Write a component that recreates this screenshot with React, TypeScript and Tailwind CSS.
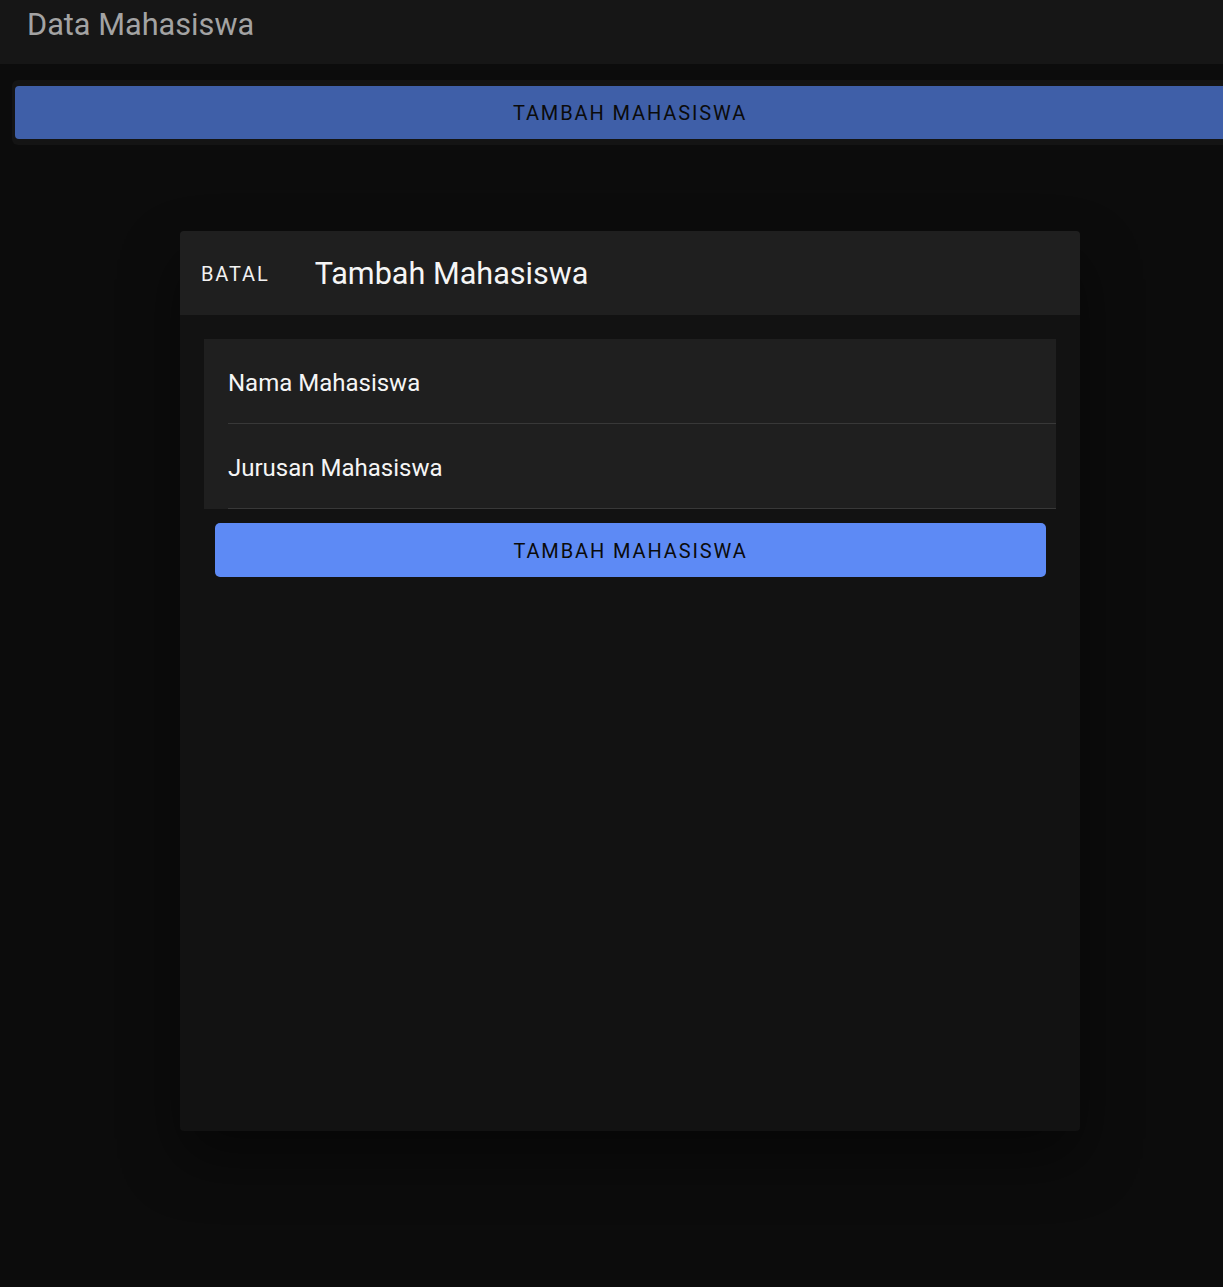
import React from "react";

export default function App() {
  const font = { fontFamily: "Roboto, 'Noto Sans', sans-serif" };
  return (
    <div
      className="relative w-[1223px] h-[1287px] overflow-hidden bg-[#0c0c0c]"
      style={font}
    >
      {/* Header */}
      <div className="h-[64px] bg-[#161616] pl-[27px] pt-[7px]">
        <div className="text-[30.7px] leading-[36px] text-[#a3a3a3]">Data Mahasiswa</div>
      </div>

      {/* Top button strip */}
      <div className="mt-[16px] ml-[12px] w-[1240px] rounded-[6px] bg-[#141414] pl-[3px] py-[6px]">
        <button className="flex h-[53px] w-[1230px] items-center justify-center rounded-[4px] bg-[#3f5fa8] pt-[1px] text-[20px] tracking-[0.094em] text-[#0b0b0b]">
          TAMBAH MAHASISWA
        </button>
      </div>

      {/* Modal */}
      <div className="absolute left-[180px] top-[231px] flex h-[900px] w-[900px] flex-col overflow-hidden rounded-[4px] bg-[#121212] shadow-[0_28px_60px_rgba(0,0,0,0.45)]">
        <div className="flex h-[84px] items-center bg-[#1f1f1f] pt-[1px]">
          <span className="ml-[21px] text-[20px] tracking-[0.094em] text-[#f2f2f2]">BATAL</span>
          <span className="ml-[45px] text-[30.6px] text-[#f5f5f5]">Tambah Mahasiswa</span>
        </div>
        <div className="px-[24px] pt-[24px]">
          <div className="bg-[#1f1f1f]">
            <div className="ml-[24px] flex h-[85px] items-center border-b border-[#383838] pt-[3px] text-[24px] text-[#f5f5f5]">
              Nama Mahasiswa
            </div>
            <div className="ml-[24px] flex h-[85px] items-center border-b border-[#383838] pt-[3px] text-[24px] text-[#f5f5f5]">
              Jurusan Mahasiswa
            </div>
          </div>
          <div className="mt-[14px] pl-[11px] pr-[10px]">
            <button className="flex h-[54px] w-full items-center justify-center rounded-[5px] bg-[#5d8af5] pt-[1px] text-[20px] tracking-[0.094em] text-[#0b0b0b]">
              TAMBAH MAHASISWA
            </button>
          </div>
        </div>
      </div>
    </div>
  );
}
